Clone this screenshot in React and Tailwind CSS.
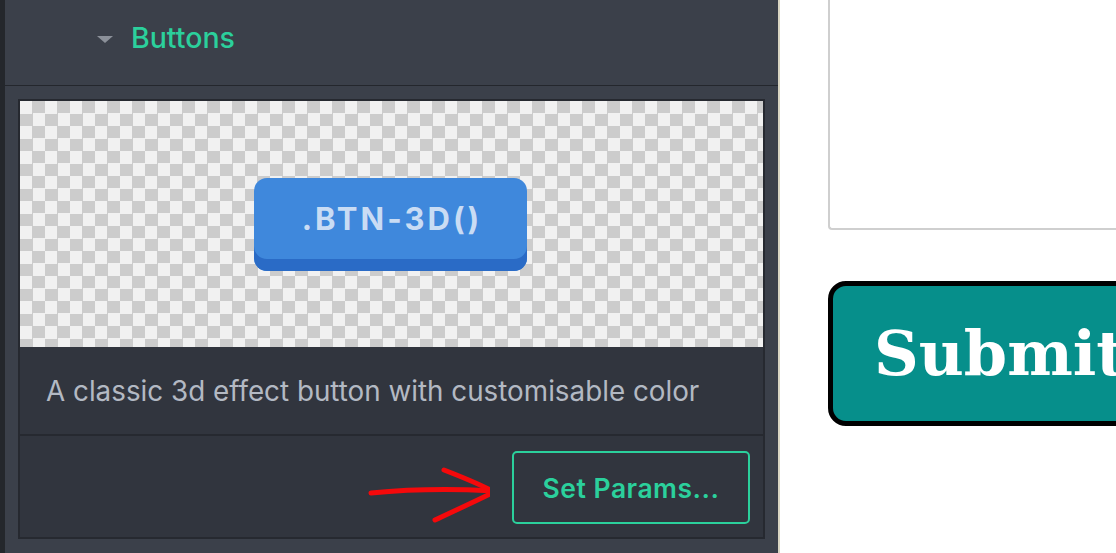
export default function App() {
  return (
    <div className="flex h-[553px] w-[1116px] overflow-hidden bg-white">
      <div className="flex w-[780px] shrink-0 flex-col border-l-[5px] border-r-2 border-l-[#24272c] border-r-[#d9d5c2] bg-[#3b404a] font-['Inter',sans-serif]">
        <div className="flex h-[86px] shrink-0 items-center border-b border-[#24272d] pb-[8px] pl-[92px]">
          <svg width="16" height="7" viewBox="0 0 16 7" className="mt-[1px]">
            <path d="M0 0 H16 L8 7 Z" fill="#8b9099" />
          </svg>
          <span className="ml-[18px] text-[28.5px] font-medium text-[#2bd09c]">Buttons</span>
        </div>
        <div className="mx-[13px] mt-[13px] flex flex-col border-2 border-[#262930] bg-[#31353e]">
          <div className="flex h-[246px] items-center justify-center bg-[conic-gradient(#cccccc_25%,#f1f1f1_0_50%,#cccccc_0_75%,#f1f1f1_0)] bg-[length:25px_25px]">
            <div className="ml-[-2px] flex h-[93px] w-[273px] items-center justify-center rounded-[13px] bg-[#3f88dc] pb-[10px] pl-[3px] text-[31px] font-bold tracking-[3px] text-[#c9dcf4] shadow-[inset_0_-12px_0_#2a6bc6]">
              .BTN-3D()
            </div>
          </div>
          <div className="flex h-[89px] items-center border-b-2 border-[#262930] pl-[26px] pt-[3px] text-[27.8px] text-[#b3b9c3]">
            A classic 3d effect button with customisable color
          </div>
          <div className="relative flex h-[101px] items-start justify-end pr-[13px] pt-[15px]">
            <svg className="absolute left-[330px] top-[31px]" width="140" height="60" viewBox="348 468 140 60">
              <path d="M369 494 C400 491 440 489 492 492" stroke="#f5090b" strokeWidth="5" fill="none" strokeLinecap="round" />
              <path d="M442 471 C460 478 478 485 492 493 C474 502 452 512 433 521" stroke="#f5090b" strokeWidth="5" fill="none" strokeLinecap="round" strokeLinejoin="round" />
            </svg>
            <button className="flex h-[73px] w-[238px] items-center justify-center rounded-[5px] border-2 border-[#2bd09c] pt-[2px] text-[26.5px] font-semibold tracking-[0.5px] text-[#2bd09c]">
              Set Params...
            </button>
          </div>
        </div>
      </div>
      <div className="flex flex-1 flex-col pl-[48px]">
        <div className="h-[230px] w-[400px] shrink-0 rounded-bl-[4px] border-b-2 border-l-2 border-[#cfcfcf]" />
        <div className="mt-[51px] flex h-[145px] w-[400px] shrink-0 items-center rounded-[18px] border-[5px] border-black bg-[#068f8b] pl-[41px]">
          <span className="font-['DejaVu_Serif',serif] text-[62px] font-bold leading-none text-white">Submit</span>
        </div>
      </div>
    </div>
  );
}
